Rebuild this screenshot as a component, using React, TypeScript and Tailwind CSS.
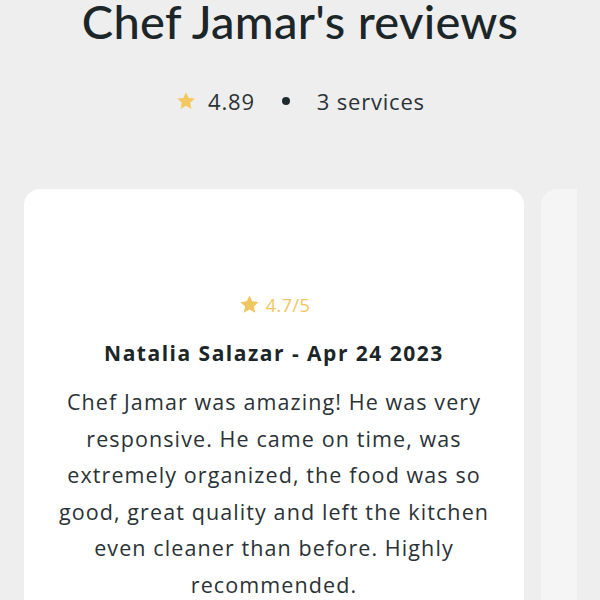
import React from "react";

function Star({ className }: { className?: string }) {
  return (
    <svg viewBox="0 0 24 24" className={className} fill="currentColor">
      <path d="M12 2.5l2.9 6.1 6.6.8-4.9 4.6 1.3 6.6L12 17.3l-5.9 3.3 1.3-6.6-4.9-4.6 6.6-.8z" />
    </svg>
  );
}

export default function App() {
  return (
    <div className="w-[600px] h-[600px] overflow-hidden bg-[#eeeeee] text-[#1f2a2e]" style={{ fontFamily: "'Open Sans', 'Noto Sans', sans-serif" }}>
      <div className="flex flex-col items-center">
        <h1 className="mt-[-8px] text-[47px] leading-[58px] font-medium tracking-[0.3px] text-[#1c2628]" style={{ fontFamily: "Lato, sans-serif" }}>Chef Jamar's reviews</h1>
        <div className="mt-[37px] flex items-center text-[22px] leading-[28px] tracking-[0.8px] text-[#2a3236]">
          <Star className="w-[22px] h-[22px] text-[#f3c85e]" />
          <span className="ml-[11px]">4.89</span>
          <span className="mx-[27px] w-[8px] h-[8px] rounded-full bg-[#1f2a2e]" />
          <span>3 services</span>
        </div>
      </div>
      <div className="mt-[74px] ml-[24px] w-[553px] overflow-hidden flex gap-[17px]">
        <div className="shrink-0 w-[500px] h-[460px] bg-white rounded-[16px] px-[28px] pt-[104px] flex flex-col items-center text-center">
          <div className="flex items-center text-[#efc660] text-[18px] leading-[22px] tracking-[0.5px]">
            <Star className="w-[23px] h-[23px]" />
            <span className="ml-[5px]">4.7/5</span>
          </div>
          <div className="mt-[22px] text-[21px] leading-[30px] font-bold tracking-[1.5px] text-[#1c2628]">Natalia Salazar - Apr 24 2023</div>
          <p className="mt-[16px] text-[21.5px] leading-[36.6px] tracking-[1.1px] text-[#2a3236]">
            Chef Jamar was amazing! He was very responsive. He came on time, was extremely organized, the food was so good, great quality and left the kitchen even cleaner than before. Highly recommended.
          </p>
        </div>
        <div className="shrink-0 w-[500px] h-[460px] bg-[#f5f5f5] rounded-[16px]" />
      </div>
    </div>
  );
}
